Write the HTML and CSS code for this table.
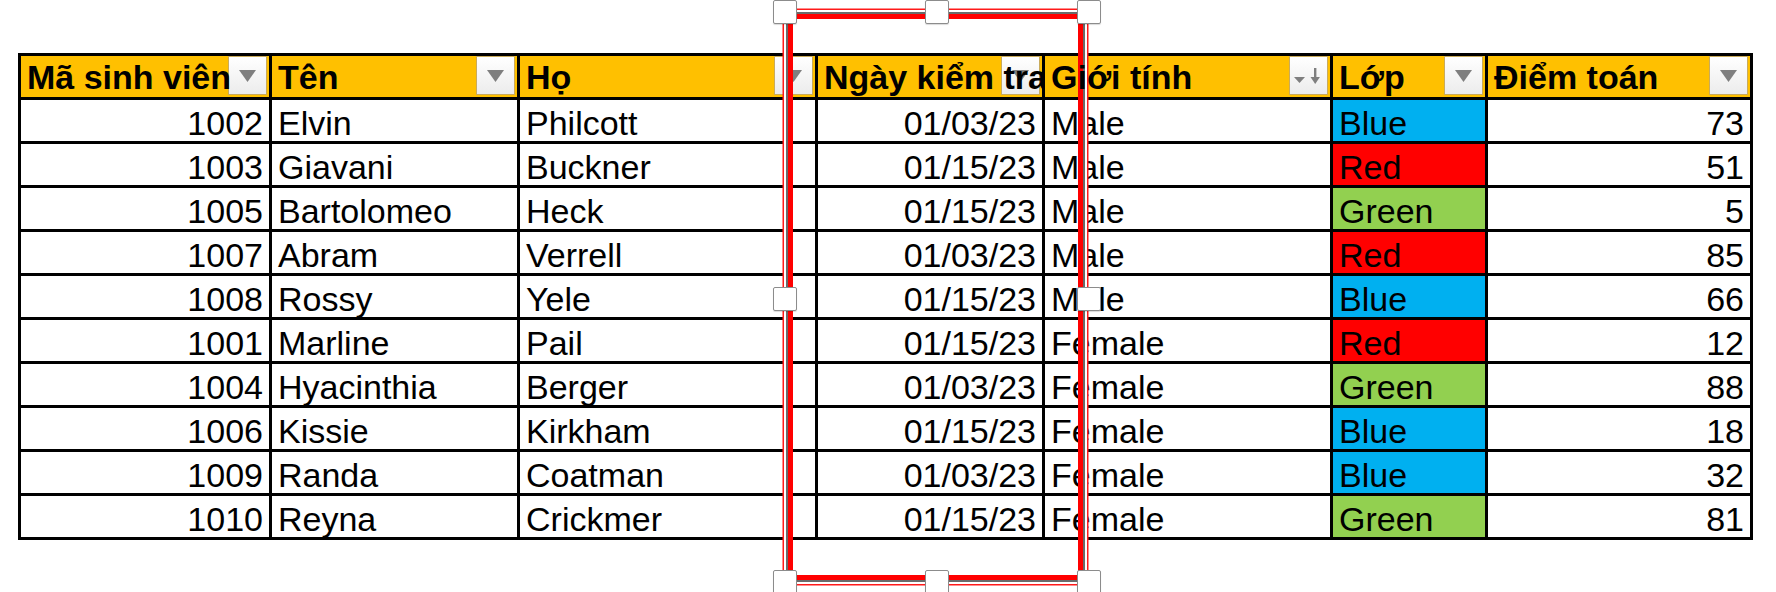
FILE: index.html
```html
<!DOCTYPE html>
<html lang="vi">
<head>
<meta charset="utf-8">
<title>Bảng điểm</title>
<link rel="stylesheet" href="styles.css">
</head>
<body>
<div class="page">
  <div class="grid">
    <div class="cell hd"><span class="t">Mã sinh viên</span><span class="btn"><svg width="17" height="12" viewBox="0 0 17 12"><polygon points="0,0 17,0 8.5,12" fill="#7f7f7f"/></svg></span></div>
    <div class="cell hd"><span class="t">Tên</span><span class="btn"><svg width="17" height="12" viewBox="0 0 17 12"><polygon points="0,0 17,0 8.5,12" fill="#7f7f7f"/></svg></span></div>
    <div class="cell hd"><span class="t">Họ</span><span class="btn"><svg width="17" height="12" viewBox="0 0 17 12"><polygon points="0,0 17,0 8.5,12" fill="#7f7f7f"/></svg></span></div>
    <div class="cell hd"><span class="t">Ngày kiểm tra</span><span class="btn"><svg width="17" height="12" viewBox="0 0 17 12"><polygon points="0,0 17,0 8.5,12" fill="#7f7f7f"/></svg></span></div>
    <div class="cell hd"><span class="t">Giới tính</span><span class="btn"><svg width="30" height="16" viewBox="0 0 30 16"><polygon points="0,9 11,9 5.5,15" fill="#7f7f7f"/><rect x="20" y="0" width="2.4" height="11" fill="#7f7f7f"/><polygon points="16.5,9 25.9,9 21.2,16" fill="#7f7f7f"/></svg></span></div>
    <div class="cell hd"><span class="t">Lớp</span><span class="btn"><svg width="17" height="12" viewBox="0 0 17 12"><polygon points="0,0 17,0 8.5,12" fill="#7f7f7f"/></svg></span></div>
    <div class="cell hd"><span class="t">Điểm toán</span><span class="btn"><svg width="17" height="12" viewBox="0 0 17 12"><polygon points="0,0 17,0 8.5,12" fill="#7f7f7f"/></svg></span></div>

    <div class="cell r">1002</div><div class="cell">Elvin</div><div class="cell">Philcott</div><div class="cell r">01/03/23</div><div class="cell">Male</div><div class="cell blue">Blue</div><div class="cell r">73</div>
    <div class="cell r">1003</div><div class="cell">Giavani</div><div class="cell">Buckner</div><div class="cell r">01/15/23</div><div class="cell">Male</div><div class="cell red">Red</div><div class="cell r">51</div>
    <div class="cell r">1005</div><div class="cell">Bartolomeo</div><div class="cell">Heck</div><div class="cell r">01/15/23</div><div class="cell">Male</div><div class="cell green">Green</div><div class="cell r">5</div>
    <div class="cell r">1007</div><div class="cell">Abram</div><div class="cell">Verrell</div><div class="cell r">01/03/23</div><div class="cell">Male</div><div class="cell red">Red</div><div class="cell r">85</div>
    <div class="cell r">1008</div><div class="cell">Rossy</div><div class="cell">Yele</div><div class="cell r">01/15/23</div><div class="cell">Male</div><div class="cell blue">Blue</div><div class="cell r">66</div>
    <div class="cell r">1001</div><div class="cell">Marline</div><div class="cell">Pail</div><div class="cell r">01/15/23</div><div class="cell">Female</div><div class="cell red">Red</div><div class="cell r">12</div>
    <div class="cell r">1004</div><div class="cell">Hyacinthia</div><div class="cell">Berger</div><div class="cell r">01/03/23</div><div class="cell">Female</div><div class="cell green">Green</div><div class="cell r">88</div>
    <div class="cell r">1006</div><div class="cell">Kissie</div><div class="cell">Kirkham</div><div class="cell r">01/15/23</div><div class="cell">Female</div><div class="cell blue">Blue</div><div class="cell r">18</div>
    <div class="cell r">1009</div><div class="cell">Randa</div><div class="cell">Coatman</div><div class="cell r">01/03/23</div><div class="cell">Female</div><div class="cell blue">Blue</div><div class="cell r">32</div>
    <div class="cell r">1010</div><div class="cell">Reyna</div><div class="cell">Crickmer</div><div class="cell r">01/15/23</div><div class="cell">Female</div><div class="cell green">Green</div><div class="cell r">81</div>
  </div>

  <div class="sel"></div>
  <span class="handle h-tl"></span>
  <span class="handle h-tc"></span>
  <span class="handle h-tr"></span>
  <span class="handle h-ml"></span>
  <span class="handle h-mr"></span>
  <span class="handle h-bl"></span>
  <span class="handle h-bc"></span>
  <span class="handle h-br"></span>
</div>
</body>
</html>
```

FILE: styles.css
```css
html, body {
  margin: 0;
  padding: 0;
  background: #ffffff;
}

.page {
  position: relative;
  width: 1776px;
  height: 592px;
  overflow: hidden;
  box-sizing: border-box;
  padding: 53px 0 0 18px;
  font-family: "Liberation Sans", Arial, sans-serif;
  color: #000;
}

.grid {
  display: grid;
  grid-template-columns: 251px 248px 298px 227px 288px 155px 265px;
  grid-template-rows: 44px repeat(10, 44px);
  width: max-content;
  border-left: 3px solid #000;
  border-top: 3px solid #000;
}

.cell {
  box-sizing: border-box;
  border-right: 3px solid #000;
  border-bottom: 3px solid #000;
  font-size: 34px;
  line-height: 37px;
  padding: 5px 6px 0 6px;
  white-space: nowrap;
  overflow: hidden;
}

.cell.r {
  text-align: right;
}

.hd {
  position: relative;
  background: #ffc000;
  font-weight: bold;
  padding-top: 3px;
}

.hd .t {
  position: relative;
  z-index: 1;
}

.btn {
  position: absolute;
  z-index: 0;
  top: 0;
  right: 2px;
  width: 39px;
  height: 39px;
  box-sizing: border-box;
  border: 1px solid #c9ab5c;
  background: linear-gradient(#ffffff, #ececec);
  display: flex;
  align-items: center;
  justify-content: center;
}

.btn svg {
  display: block;
}

.blue { background: #00b0f0; }
.red { background: #ff0000; }
.green { background: #92d050; }

.sel {
  position: absolute;
  left: 788px;
  top: 14px;
  width: 295px;
  height: 566px;
  box-sizing: border-box;
  border: 5px solid #ff0000;
  box-shadow: 0 0 0 2px #6a6a6a, 0 0 0 4px #ffffff, 0 0 0 5.5px #ff1a1a;
}

.handle {
  position: absolute;
  width: 24px;
  height: 24px;
  box-sizing: border-box;
  background: #ffffff;
  border: 1px solid #8c8c8c;
  border-radius: 2px;
  box-shadow: 0 1px 1px rgba(0, 0, 0, 0.15);
}

.h-tl { left: 773px; top: 0; }
.h-tc { left: 925px; top: 0; }
.h-tr { left: 1077px; top: 0; }
.h-ml { left: 773px; top: 287px; }
.h-mr { left: 1077px; top: 287px; }
.h-bl { left: 773px; top: 570px; }
.h-bc { left: 925px; top: 570px; }
.h-br { left: 1077px; top: 570px; }
```
